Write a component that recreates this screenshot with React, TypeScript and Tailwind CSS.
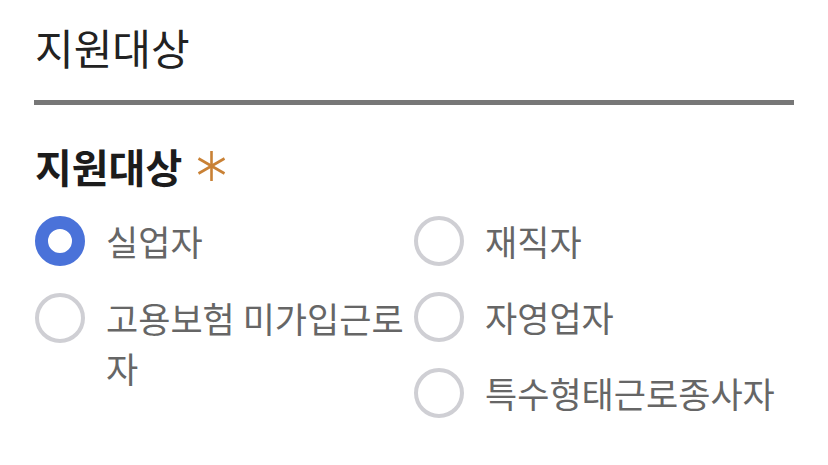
import React from 'react';

const LEFT = [
  { id: 'unemployed', label: '실업자', checked: true },
  { id: 'uninsured', label: '고용보험 미가입근로자', checked: false },
];

const RIGHT = [
  { id: 'employed', label: '재직자', checked: false },
  { id: 'selfEmployed', label: '자영업자', checked: false },
  { id: 'special', label: '특수형태근로종사자', checked: false },
];

const Asterisk: React.FC = () => (
  <svg width="31" height="32" viewBox="0 0 31 32" className="ml-[14px]">
    <g stroke="#c98135" strokeWidth="2.6" strokeLinecap="butt">
      <line x1="15.5" y1="1" x2="15.5" y2="31" />
      <line x1="2.5" y1="8.5" x2="28.5" y2="23.5" />
      <line x1="2.5" y1="23.5" x2="28.5" y2="8.5" />
    </g>
  </svg>
);

const Radio: React.FC<{ label: string; checked: boolean }> = ({ label, checked }) => (
  <label className="flex items-start gap-[21px]">
    {checked ? (
      <span className="w-[50px] h-[50px] shrink-0 rounded-full border-[13px] border-[#4a72d9] bg-white"></span>
    ) : (
      <span className="w-[50px] h-[50px] shrink-0 rounded-full border-4 border-[#cfcfd4] bg-white"></span>
    )}
    <span className="text-[35px] leading-[50px] text-[#666666]">{label}</span>
  </label>
);

const App: React.FC = () => {
  return (
    <div
      className="w-[828px] h-[465px] bg-white px-[34px] overflow-hidden"
      style={{ fontFamily: '"Noto Sans CJK KR", "Noto Sans", sans-serif' }}
    >
      {/* Section header */}
      <div className="pt-[24px] pb-[30px] border-b-[5px] border-[#777777]">
        <h1 className="text-[42px] leading-[46px] text-[#222222] pl-[1px]">지원대상</h1>
      </div>

      {/* Field */}
      <div className="pt-[38px]">
        <div className="flex items-center pl-[1px]">
          <h2 className="text-[40px] leading-[46px] font-bold text-[#1c1c1c]">지원대상</h2>
          <Asterisk />
        </div>

        <div className="grid grid-cols-2 mt-[27px]">
          <div className="flex flex-col gap-[27px] pl-[1px]">
            {LEFT.map((o) => (
              <Radio key={o.id} label={o.label} checked={o.checked} />
            ))}
          </div>
          <div className="flex flex-col gap-[26px]">
            {RIGHT.map((o) => (
              <Radio key={o.id} label={o.label} checked={o.checked} />
            ))}
          </div>
        </div>
      </div>
    </div>
  );
};

export default App;
